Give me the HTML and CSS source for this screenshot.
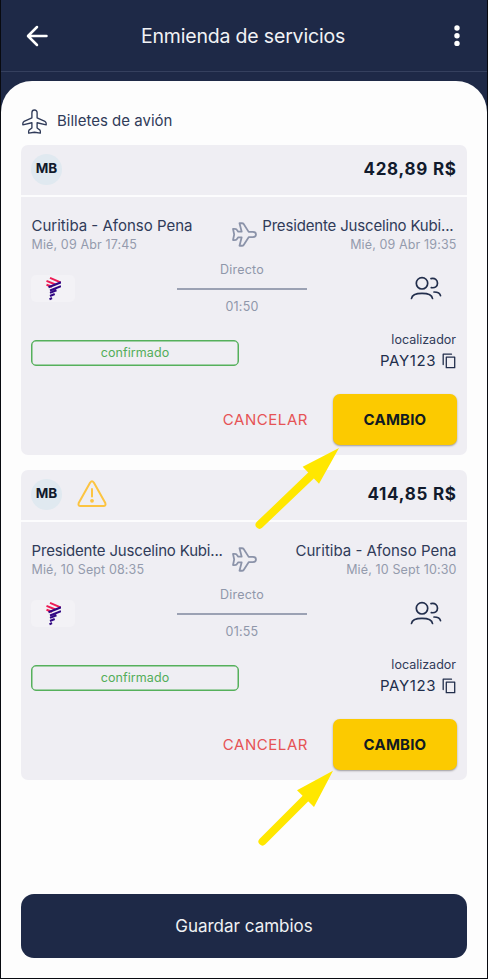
FILE: index.html
```html
<!DOCTYPE html>
<html lang="es">
<head>
<meta charset="utf-8">
<meta name="viewport" content="width=device-width, initial-scale=1">
<title>Enmienda de servicios</title>
<link rel="stylesheet" href="styles.css">
</head>
<body>
<svg class="defs" width="0" height="0" aria-hidden="true">
  <symbol id="plane" viewBox="0 0 24 24">
    <path d="M12 1C10.500 1 9.500 2 9.500 3.600V8.500L2 11.800Q.8 12.400.8 14V15.200L9.500 13.200V18.300L6.700 20.300Q6.200 20.800 6.400 23.200L12 22.300L17.600 23.200Q17.800 20.800 17.300 20.300L14.500 18.300V13.200L23.200 15.200V14Q23.200 12.400 22 11.800L14.500 8.500V3.600C14.500 2 13.500 1 12 1Z"/>
  </symbol>
  <symbol id="jet" viewBox="0 0 24 24">
    <path d="M23 12.100C23 10.500 21.700 9.500 20 9.500H16L11.200 2Q10.700 1.200 9.500 1.200H7.200L9.300 9.300H6L4.400 7.200Q4 6.500 1 6.700L2.100 12L1 17.300Q4 17.500 4.400 16.800L6 14.700H9.300L7.200 22.800H9.500Q10.700 22.800 11.200 22L16 14.600H20C21.700 14.600 23 13.700 23 12.100Z"/>
  </symbol>
  <symbol id="people" viewBox="0 0 32 24">
    <circle cx="12" cy="7.300" r="5.700"/>
    <path d="M1.500 22.500C2 18.800 5.500 17.300 12 17.300S22 18.800 22.500 22.500M21 2.600C25 1.700 27.500 4 27.500 7.300S25 12.200 21.300 11.600M24 16C28 16 30 17 30.500 19.600"/>
  </symbol>
  <symbol id="copy" viewBox="0 0 14 16">
    <path d="M1.200 11.500V1.200H9.500M4.300 4.200H12.700V14.700H4.300Z"/>
  </symbol>
  <symbol id="airline" viewBox="0 0 16 24">
    <path class="red" d="M5 .9L15.500 5.300M1.500 3.800L10.500 7.500M1.500 7.800L7 9.800"/>
    <path class="violet" d="M16 5.300L3.500 10.300M16 9.200L5 13.500M11.500 13.300L5 15.900M9.700 17L5 19M7 21L4.500 22.300"/>
  </symbol>
</svg>
<div class="screen">
  <header class="topbar">
    <svg class="back" viewBox="0 0 22 22"><path d="M20.500 11H2.500M11 2L2 11L11 20"/></svg>
    <h1 class="title">Enmienda de servicios</h1>
    <svg class="more" viewBox="0 0 6 22"><circle cx="3" cy="3" r="2.700"/><circle cx="3" cy="10.700" r="2.700"/><circle cx="3" cy="18.400" r="2.700"/></svg>
  </header>
  <main class="sheet">
    <div class="section"><svg class="plane"><use href="#plane"/></svg><h2 class="section-name">Billetes de avión</h2></div>

    <article class="card">
      <div class="card-head">
        <span class="avatar"><b>MB</b></span>
        <strong class="price">428,89 R$</strong>
      </div>
      <div class="card-body">
        <div class="route">
          <div class="stop"><div class="place">Curitiba - Afonso Pena</div><div class="date">Mié, 09 Abr 17:45</div></div>
          <svg class="jet"><use href="#jet"/></svg>
          <div class="stop end"><div class="place long">Presidente Juscelino Kubi...</div><div class="date">Mié, 09 Abr 19:35</div></div>
        </div>
        <div class="flight">
          <div class="carrier"><svg class="airline"><use href="#airline"/></svg></div>
          <div class="leg"><span>Directo</span><i class="line"></i><span class="time">01:50</span></div>
          <svg class="people"><use href="#people"/></svg>
        </div>
        <div class="booking">
          <div class="status">confirmado</div>
          <div class="locator"><div class="label">localizador</div><div class="code"><span>PAY123</span><svg class="copy"><use href="#copy"/></svg></div></div>
        </div>
        <div class="actions"><button class="cancel">CANCELAR</button><button class="change">CAMBIO</button></div>
      </div>
    </article>

    <article class="card">
      <div class="card-head">
        <span class="avatar"><b>MB</b></span>
        <svg class="warning" viewBox="0 0 30 28"><path d="M13.200 2.500Q15 .2 16.800 2.500L28.300 23Q29.200 26 26.500 26H3.500Q.8 26 1.700 23ZM15 9V16.500"/><circle cx="15" cy="20.800" r="1.900"/></svg>
        <strong class="price">414,85 R$</strong>
      </div>
      <div class="card-body">
        <div class="route">
          <div class="stop"><div class="place long">Presidente Juscelino Kubi...</div><div class="date">Mié, 10 Sept 08:35</div></div>
          <svg class="jet"><use href="#jet"/></svg>
          <div class="stop end"><div class="place">Curitiba - Afonso Pena</div><div class="date">Mié, 10 Sept 10:30</div></div>
        </div>
        <div class="flight">
          <div class="carrier"><svg class="airline"><use href="#airline"/></svg></div>
          <div class="leg"><span>Directo</span><i class="line"></i><span class="time">01:55</span></div>
          <svg class="people"><use href="#people"/></svg>
        </div>
        <div class="booking">
          <div class="status">confirmado</div>
          <div class="locator"><div class="label">localizador</div><div class="code"><span>PAY123</span><svg class="copy"><use href="#copy"/></svg></div></div>
        </div>
        <div class="actions"><button class="cancel">CANCELAR</button><button class="change">CAMBIO</button></div>
      </div>
    </article>

    <button class="save">Guardar cambios</button>
  </main>
  <svg class="pointers" viewBox="0 0 488 979" aria-hidden="true">
    <path class="shaft" d="M259.600 524.700L311 475.500M262.500 841.500L305.500 798.500"/>
    <path class="tip" d="M339 448L302.700 466.700L319 483.700ZM333 770.700L297 790.300L314 807Z"/>
  </svg>
</div>
</body>
</html>
```
FILE: styles.css
```css
* { box-sizing: border-box; }
body { margin: 0; font-family: Inter, "Open Sans", sans-serif; color: #303b59; }
h1, h2 { margin: 0; font-weight: 400; }
button { border: 0; padding: 0; font: inherit; background: none; }
svg { flex: none; fill: none; stroke: currentColor; stroke-linecap: round; stroke-linejoin: round; }
.defs { display: block; }
.screen { position: relative; display: flex; flex-direction: column; height: 979px; background: #1e2947; border: solid #080a10; border-width: 0 1px 1px; overflow: hidden; }
.topbar { display: grid; grid-template-columns: 40px 1fr 40px; align-items: center; height: 72px; padding: 0 27px 0 25px; border-bottom: 1px solid #35405e; color: #fff; }
.back { width: 22px; height: 22px; stroke-width: 2.5; }
.title { font-size: 19.5px; line-height: 26px; letter-spacing: -.18px; color: #f1f2f5; text-align: center; }
.more { width: 6px; height: 22px; fill: #fff; stroke: none; justify-self: end; }
.sheet { flex: 1; display: flex; flex-direction: column; gap: 16px; margin-top: 9px; padding: 27px 20px 20px; background: #fdfdfd; border-radius: 31px 31px 0 0; }
.section { display: flex; align-items: center; gap: 10px; height: 26px; margin-bottom: -5px; padding-left: 1px; }
.plane { width: 25px; height: 25px; stroke-width: 1.3; }
.section-name { font-size: 15px; line-height: 20px; margin-top: -1px; }
.card { flex: none; height: 309.500px; background: #efeef3; border-radius: 7px; }
.card + .card { margin-top: -.5px; }
.card-head { display: flex; align-items: center; gap: 16px; height: 52px; padding: 0 11px 2px 10px; border-bottom: 2px solid #fcfcfd; }
.avatar { display: grid; place-items: center; width: 31px; height: 31px; border-radius: 50%; background: #e0e9f0; color: #111a2c; font-size: 13.500px; }
.avatar b { font-weight: 700; transform: translateY(-1px); }
.warning { width: 30px; height: 28px; margin-left: -1px; color: #fcc441; stroke-width: 2; }
.warning circle { fill: currentColor; stroke: none; }
.price { margin-left: auto; font-size: 17px; font-weight: 700; color: #111a2c; letter-spacing: .75px; margin-right: -.7px; }
.card-body { padding: 20px 10px 0; }
.route { display: grid; grid-template-columns: 201px 24px 1fr; }
.stop { white-space: nowrap; padding-left: .5px; }
.stop.end { display: flex; flex-direction: column; align-items: flex-end; padding: 0 .5px 0 0; }
.place { font-size: 15px; line-height: 18px; }
.long { letter-spacing: -.17px; }
.end .long { padding-right: 3px; }
.date { margin-top: 1px; font-size: 12.500px; line-height: 17px; color: #949bad; letter-spacing: .13px; }
.jet { width: 25px; height: 25px; margin-top: 5px; stroke-width: 1.7; color: #8b93a9; }
.flight { display: flex; align-items: center; height: 54px; margin-top: 8px; }
.carrier { display: grid; place-items: center; width: 44px; height: 27px; margin-top: 1px; border-radius: 5px; background: #f3f2f6; }
.airline { width: 16px; height: 24px; stroke-width: 2; stroke-linecap: butt; }
.red { stroke: #ed1c55; }
.violet { stroke: #310783; }
.leg { display: flex; flex-direction: column; align-items: center; width: 130px; margin-left: 102px; font-size: 12.500px; line-height: 17px; color: #8f97aa; letter-spacing: .2px; }
.line { width: 130px; height: 2px; margin: 10px 0 8px; background: #9ba1b3; }
.people { width: 32px; height: 24px; margin-left: 103px; stroke-width: 1.7; color: #222e4c; }
.booking { display: flex; justify-content: space-between; height: 40px; margin-top: 17px; padding-right: 1px; }
.status { width: 208px; height: 26px; margin-top: 8px; border: 1px solid #55b05b; box-shadow: inset 0 0 0 .5px #55b05b; border-radius: 5px; color: #53ad59; text-align: center; font-size: 12.500px; line-height: 23px; letter-spacing: .1px; }
.locator { display: flex; flex-direction: column; align-items: flex-end; }
.label { font-size: 12.500px; line-height: 16px; }
.code { display: flex; align-items: center; gap: 6px; margin-top: 3px; font-size: 15px; line-height: 20px; letter-spacing: .6px; color: #222e4c; }
.copy { width: 14px; height: 16px; stroke-width: 1.3; }
.actions { display: flex; justify-content: flex-end; align-items: center; gap: 25px; margin-top: 22px; }
.cancel { color: #e65355; font-size: 15px; letter-spacing: .55px; }
.change { width: 124px; height: 51px; border-radius: 7px; background: #fcca00; color: #111a22; font-size: 15px; font-weight: 700; letter-spacing: .2px; box-shadow: 0 1px 2px #9c9a9c; }
.save { flex: none; height: 64px; margin-top: auto; border-radius: 13px; background: #1e2947; color: #f0f1f4; font-size: 17px; }
.pointers { position: absolute; top: 0; left: -1px; width: 488px; height: 979px; pointer-events: none; }
.shaft { stroke: #ffe700; stroke-width: 8; }
.tip { fill: #ffe700; stroke: none; }
```
